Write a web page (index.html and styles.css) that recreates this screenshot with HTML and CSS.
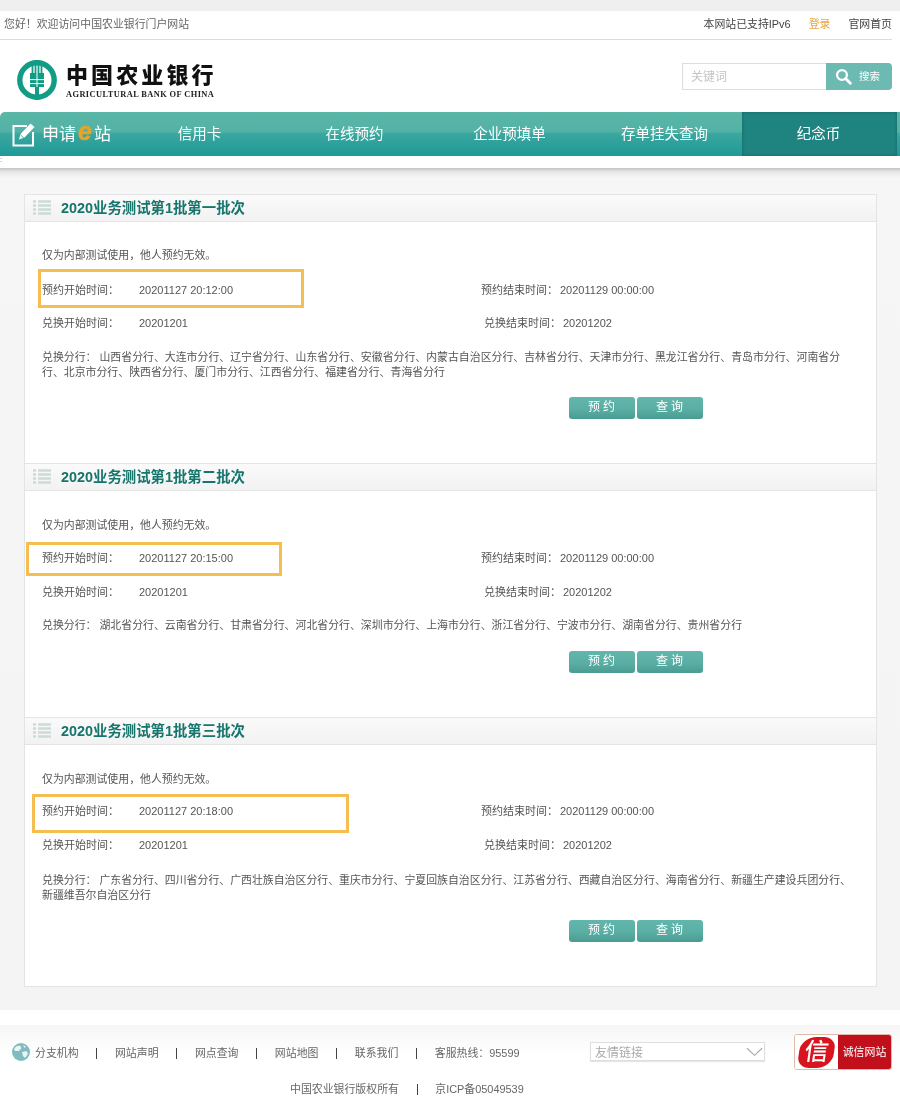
FILE: index.html
```html
<!DOCTYPE html>
<html lang="zh-CN">
<head>
<meta charset="utf-8">
<title>中国农业银行</title>
<link rel="stylesheet" href="styles.css">
</head>
<body>
<header class="site-header">
  <div class="topbar">
    <span class="welcome">您好&#xFF01;欢迎访问中国农业银行门户网站</span>
    <div class="top-links">
      <span>本网站已支持IPv6</span>
      <a class="login">登录</a>
      <a>官网首页</a>
    </div>
  </div>
  <div class="logo-row">
    <div class="logo">
      <svg class="emblem" viewBox="0 0 40 40" width="40" height="40">
        <circle cx="20" cy="20" r="17.2" fill="none" stroke="#119c84" stroke-width="5.4"/>
        <rect x="13" y="13" width="14" height="14" fill="#119c84"/>
        <rect x="17.6" y="0" width="1.8" height="14" fill="#119c84"/>
        <rect x="20.6" y="0" width="1.8" height="14" fill="#119c84"/>
        <rect x="14.6" y="3" width="1.8" height="11" fill="#119c84"/>
        <rect x="23.6" y="3" width="1.8" height="11" fill="#119c84"/>
        <rect x="18" y="26" width="4" height="14" fill="#119c84"/>
        <path d="M13 19.6h14M13 23.6h14" stroke="#fff" stroke-width="1"/>
        <path d="M20 13v14" stroke="#fff" stroke-width="1"/>
      </svg>
      <div class="logo-text">
        <div class="logo-cn">中国农业银行</div>
        <div class="logo-en">AGRICULTURAL BANK OF CHINA</div>
      </div>
    </div>
    <form class="search">
      <span class="search-input">关键词</span>
      <span class="search-btn">
        <svg viewBox="0 0 18 18" width="17" height="17"><circle cx="7.4" cy="7.4" r="5.2" fill="none" stroke="#fff" stroke-width="2.4"/><path d="M11.2 11.2 16.2 16.2" stroke="#fff" stroke-width="3" stroke-linecap="round"/></svg>
        <span>搜索</span>
      </span>
    </form>
  </div>
  <nav class="nav">
    <div class="brand">
      <svg viewBox="0 0 24 25" width="24" height="25">
        <path d="M15 4H1.5v19.5H21V10" fill="none" stroke="#fff" stroke-width="2"/>
        <path d="M7 17.5 8.5 12 18.5 1.5l4 3.5L12.5 15.5z" fill="#fff"/>
        <path d="M8.6 13l3.2 2.8" stroke="#4fb0a4" stroke-width="1"/>
      </svg>
      <span class="brand-text">申请<i class="brand-e">e</i>站</span>
    </div>
    <a class="nav-item">信用卡</a>
    <a class="nav-item">在线预约</a>
    <a class="nav-item">企业预填单</a>
    <a class="nav-item">存单挂失查询</a>
    <a class="nav-item active">纪念币</a>
  </nav>
  <div class="nav-strip">:</div>
</header>

<main class="main">
  <div class="panel">
    <section class="batch batch-first">
      <h2 class="batch-head">
        <svg class="list-icon" viewBox="0 0 18 16" width="18" height="16"><path d="M0 1.5h3M5 1.5h13M0 5.5h3M5 5.5h13M0 9.5h3M5 9.5h13M0 13.5h3M5 13.5h13" stroke="#cddbd8" stroke-width="2.4"/></svg>
        2020业务测试第1批第一批次
      </h2>
      <div class="batch-body">
        <p class="notice">仅为内部测试使用&#xFF0C;他人预约无效。</p>
        <div class="row row-time">
          <div class="cell"><span class="label">预约开始时间&#xFF1A;</span><span>20201127 20:12:00</span></div>
          <div class="cell cell-end"><span>预约结束时间&#xFF1A;</span><span class="end-value">20201129 00:00:00</span></div>
        </div>
        <div class="row row-swap">
          <div class="cell"><span class="label">兑换开始时间&#xFF1A;</span><span>20201201</span></div>
          <div class="cell cell-end"><span>兑换结束时间&#xFF1A;</span><span class="end-value">20201202</span></div>
        </div>
        <p class="branches">兑换分行&#xFF1A; 山西省分行、大连市分行、辽宁省分行、山东省分行、安徽省分行、内蒙古自治区分行、吉林省分行、天津市分行、黑龙江省分行、青岛市分行、河南省分行、北京市分行、陕西省分行、厦门市分行、江西省分行、福建省分行、青海省分行</p>
        <div class="actions"><a class="btn">预约</a><a class="btn">查询</a></div>
        <div class="mark mark-1"></div>
      </div>
    </section>
    <section class="batch batch-mid">
      <h2 class="batch-head">
        <svg class="list-icon" viewBox="0 0 18 16" width="18" height="16"><path d="M0 1.5h3M5 1.5h13M0 5.5h3M5 5.5h13M0 9.5h3M5 9.5h13M0 13.5h3M5 13.5h13" stroke="#cddbd8" stroke-width="2.4"/></svg>
        2020业务测试第1批第二批次
      </h2>
      <div class="batch-body">
        <p class="notice">仅为内部测试使用&#xFF0C;他人预约无效。</p>
        <div class="row row-time">
          <div class="cell"><span class="label">预约开始时间&#xFF1A;</span><span>20201127 20:15:00</span></div>
          <div class="cell cell-end"><span>预约结束时间&#xFF1A;</span><span class="end-value">20201129 00:00:00</span></div>
        </div>
        <div class="row row-swap">
          <div class="cell"><span class="label">兑换开始时间&#xFF1A;</span><span>20201201</span></div>
          <div class="cell cell-end"><span>兑换结束时间&#xFF1A;</span><span class="end-value">20201202</span></div>
        </div>
        <p class="branches">兑换分行&#xFF1A; 湖北省分行、云南省分行、甘肃省分行、河北省分行、深圳市分行、上海市分行、浙江省分行、宁波市分行、湖南省分行、贵州省分行</p>
        <div class="actions"><a class="btn">预约</a><a class="btn">查询</a></div>
        <div class="mark mark-2"></div>
      </div>
    </section>
    <section class="batch batch-last">
      <h2 class="batch-head">
        <svg class="list-icon" viewBox="0 0 18 16" width="18" height="16"><path d="M0 1.5h3M5 1.5h13M0 5.5h3M5 5.5h13M0 9.5h3M5 9.5h13M0 13.5h3M5 13.5h13" stroke="#cddbd8" stroke-width="2.4"/></svg>
        2020业务测试第1批第三批次
      </h2>
      <div class="batch-body">
        <p class="notice">仅为内部测试使用&#xFF0C;他人预约无效。</p>
        <div class="row row-time">
          <div class="cell"><span class="label">预约开始时间&#xFF1A;</span><span>20201127 20:18:00</span></div>
          <div class="cell cell-end"><span>预约结束时间&#xFF1A;</span><span class="end-value">20201129 00:00:00</span></div>
        </div>
        <div class="row row-swap">
          <div class="cell"><span class="label">兑换开始时间&#xFF1A;</span><span>20201201</span></div>
          <div class="cell cell-end"><span>兑换结束时间&#xFF1A;</span><span class="end-value">20201202</span></div>
        </div>
        <p class="branches">兑换分行&#xFF1A; 广东省分行、四川省分行、广西壮族自治区分行、重庆市分行、宁夏回族自治区分行、江苏省分行、西藏自治区分行、海南省分行、新疆生产建设兵团分行、新疆维吾尔自治区分行</p>
        <div class="actions"><a class="btn">预约</a><a class="btn">查询</a></div>
        <div class="mark mark-3"></div>
      </div>
    </section>
  </div>
</main>

<footer class="footer">
  <div class="footer-main">
    <div class="footer-links">
      <svg class="globe" viewBox="0 0 18 18" width="18" height="18">
        <circle cx="9" cy="9" r="9" fill="#7fbcc0"/>
        <path d="M4 3.5 8 2.5 9.5 5 7 8 3 8 2 6zM10 9l4.5-1 1.5 3-3 4-2-2zM11 2l3 1.5L12.5 5z" fill="#eaf4f4"/>
      </svg>
      <a>分支机构</a><i class="sep"></i><a>网站声明</a><i class="sep"></i><a>网点查询</a><i class="sep"></i><a>网站地图</a><i class="sep"></i><a>联系我们</a><i class="sep"></i><span>客服热线&#xFF1A;95599</span>
    </div>
    <div class="friend-links">
      <span class="friend-label">友情链接</span>
      <svg viewBox="0 0 18 10" width="17" height="10"><path d="M1 1l8 7.5L17 1" fill="none" stroke="#a9a9a9" stroke-width="1.2"/></svg>
    </div>
    <div class="trust">
      <div class="trust-mark"><span class="trust-char">信</span></div>
      <div class="trust-text">诚信网站</div>
    </div>
  </div>
  <div class="copyright"><span>中国农业银行版权所有</span><i class="sep"></i><span>京ICP备05049539</span></div>
</footer>
</body>
</html>
```
FILE: styles.css
```css
* { box-sizing: border-box; }
html, body { margin: 0; padding: 0; }
body {
  background: #fff;
  color: #555;
  font-family: "Liberation Sans", "Noto Sans CJK SC", sans-serif;
  font-size: 10.9px;
  line-height: 15px;
  height: 1115px;
  overflow: hidden;
  filter: blur(0.3px);
}
a { color: inherit; text-decoration: none; }

/* header */
.site-header { background: #fff; border-top: 11px solid #efefef; }
.topbar {
  height: 29px;
  margin-right: 8px;
  padding-left: 4px;
  border-bottom: 1px solid #dcdcdc;
  display: flex;
  justify-content: space-between;
  align-items: center;
  padding-bottom: 1px;
}
.welcome { color: #666; }
.top-links { display: flex; gap: 18px; color: #444; }
.top-links .login { color: #e8a33c; }

.logo-row {
  height: 72px;
  display: flex;
  justify-content: space-between;
  align-items: flex-start;
  padding: 0 8px 0 17px;
}
.logo { display: flex; gap: 9px; padding-top: 20px; }
.logo-text { width: 149px; }
.logo-cn {
  font-family: "Noto Sans CJK SC", sans-serif;
  font-weight: 900;
  color: #111;
  font-size: 22px;
  line-height: 26px;
  letter-spacing: 3.1px;
  white-space: nowrap;
}
.logo-en {
  font-family: "Liberation Serif", serif;
  font-weight: 700;
  font-size: 8.4px;
  letter-spacing: 0.42px;
  line-height: 12px;
  color: #222;
  white-space: nowrap;
  margin-top: 3px;
}
.search { display: flex; margin-top: 23px; height: 27px; }
.search-input {
  width: 144px;
  border: 1px solid #ddd;
  border-right: 0;
  padding-left: 8px;
  color: #c4c4c4;
  font-size: 12px;
  line-height: 27px;
}
.search-btn {
  width: 66px;
  background: #6cbab1;
  border-radius: 0 4px 4px 0;
  color: #fff;
  display: flex;
  align-items: center;
  gap: 7px;
  padding-left: 9px;
  font-size: 10.5px;
}

.nav {
  height: 44px;
  display: flex;
  color: #fff;
  border-radius: 5px 0 0 0;
  background: linear-gradient(#5ab7a7 0%, #52b2a5 44%, #3aa69f 50%, #1f9a97 100%);
  font-size: 14.5px;
}
.brand { width: 122px; display: flex; align-items: center; gap: 6px; padding-left: 12px; flex: none; }
.brand-text { font-size: 17px; white-space: nowrap; line-height: 20px; margin-top: -2px; }
.brand-e {
  color: #e5a52b;
  font-family: "Liberation Sans", sans-serif;
  font-weight: 700;
  font-size: 25px;
  line-height: 20px;
  padding: 0 2px;
  -webkit-text-stroke: 0.5px #e5a52b;
}
.nav-item { width: 155px; flex: none; text-align: center; line-height: 44px; }
.nav-item.active {
  background: #1f8480;
  box-shadow: inset 0 0 3px #14605d;
  padding-right: 2px;
}
.nav-strip {
  height: 12px;
  background: #fff;
  color: #666;
  font-size: 8px;
  line-height: 8px;
}

/* main */
.main {
  background: linear-gradient(#c4c4c4 0, #e8e8e8 4px, #f6f6f6 10px, #f4f4f4 100%);
  padding: 26px 23px 23px 24px;
  height: 842px;
}
.panel { background: #fff; border: 1px solid #e4e4e4; height: 793px; }
.batch-first { height: 268px; }
.batch-mid { height: 254px; }
.batch-head {
  margin: 0;
  height: 27px;
  background: linear-gradient(#fafafa, #f2f2f2);
  border-bottom: 1px solid #e4e4e4;
  color: #16756c;
  font-size: 14.4px;
  line-height: 26px;
  font-weight: 700;
  display: flex;
  align-items: center;
  gap: 10px;
  padding-left: 8px;
}
.batch-mid .batch-head, .batch-last .batch-head { border-top: 1px solid #e4e4e4; height: 28px; }
.batch-body { position: relative; padding: 26px 17px 0; }
.batch-mid .batch-body, .batch-last .batch-body { padding-top: 27px; }
.notice { margin: 0; }
.row { display: flex; margin-top: 18px; font-size: 11px; }
.batch-first .row-time { margin-top: 20px; }
.batch-last .row-time { margin-top: 17px; }
.row-swap { margin-top: 19px; }
.batch-first .row-swap { margin-top: 18px; }
.cell { flex: none; display: flex; }
.row-time .cell:first-child { width: 439px; }
.row-swap .cell:first-child { width: 442px; }
.label { width: 97px; }
.end-value { margin-left: 2px; }
.branches { margin: 18px 0 0; width: 812px; }
.batch-first .branches { margin-top: 19px; }
.batch-last .branches { margin-top: 20px; }
.actions { display: flex; gap: 2px; margin: 18px 0 0 527px; }
.batch-first .actions, .batch-last .actions { margin-top: 17px; }
.btn {
  width: 66px;
  height: 22px;
  border-radius: 3px;
  background: linear-gradient(#62b6ab 0%, #5aaea4 55%, #4a9c92 100%);
  color: #fff;
  font-size: 12px;
  line-height: 20px;
  letter-spacing: 3px;
  text-align: center;
  text-indent: 2px;
}
.mark { position: absolute; border: 3px solid #f6bd50; }
.mark-1 { left: 13px; top: 47px; width: 266px; height: 39px; }
.mark-2 { left: 1px; top: 51px; width: 256px; height: 34px; }
.mark-3 { left: 7px; top: 49px; width: 317px; height: 39px; }

/* footer */
.footer { height: 105px; padding-top: 15px; background: #fff; }
.footer-main {
  height: 46px;
  background: linear-gradient(#f6f6f6, #fff 30px);
  position: relative;
  display: flex;
  padding: 9px 8px 0 12px;
}
.footer-links { display: flex; align-items: center; height: 18px; margin-top: 10px; width: 578px; color: #666; }
.globe { margin-right: 5px; margin-top: -2px; }
.sep { display: block; width: 1px; height: 11px; margin: 0 17.7px; background: #444; flex: none; }
.friend-links {
  width: 175px;
  height: 19px;
  margin-top: 8px;
  border: 1px solid #dedede;
  box-shadow: 0 1px 1px #e6e6e6;
  background: #fff;
  color: #aaa;
  font-size: 12px;
  line-height: 15px;
  padding: 0 1px 0 4px;
  display: flex;
  justify-content: space-between;
  align-items: center;
}
.friend-label { margin-top: 3px; }
.trust {
  position: absolute;
  right: 8px;
  top: 9px;
  width: 98px;
  height: 36px;
  display: flex;
  border: 1px solid #e0b9a8;
  border-radius: 3px;
  overflow: hidden;
}
.trust-mark { width: 43px; background: #fff; display: flex; align-items: center; justify-content: center; }
.trust-char {
  width: 35px;
  height: 31px;
  border-radius: 45% 35% 45% 35%;
  background: #d8151f;
  color: #fff;
  font-size: 24px;
  font-weight: 500;
  line-height: 30px;
  text-align: center;
  transform: skewX(-8deg);
}
.trust-text {
  flex: 1;
  background: #c1101c;
  color: #fff;
  line-height: 34px;
  text-align: center;
}
.copyright {
  display: flex;
  justify-content: flex-start;
  align-items: center;
  padding-left: 290px;
  margin-top: 11px;
  height: 15px;
  color: #666;
}
```
